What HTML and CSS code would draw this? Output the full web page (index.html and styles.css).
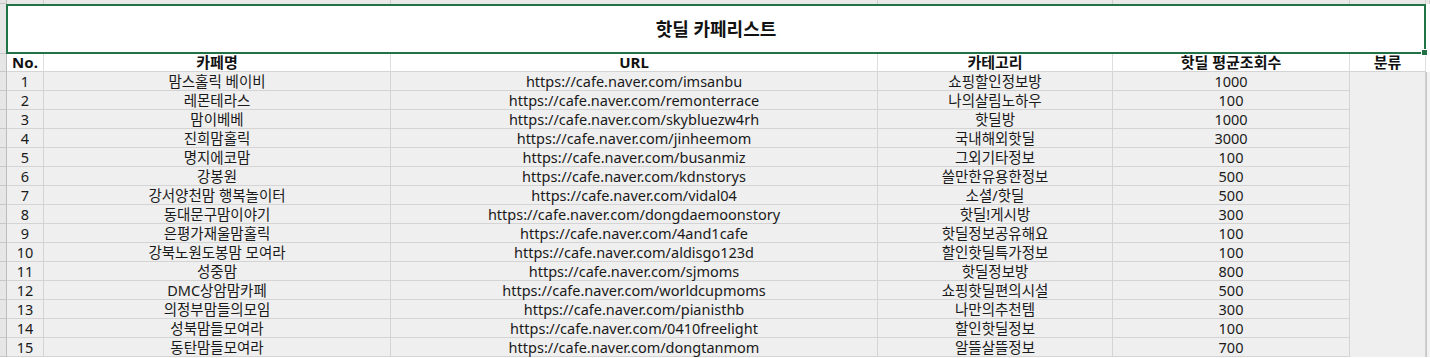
FILE: index.html
```html
<!DOCTYPE html>
<html lang="ko">
<head>
<meta charset="utf-8">
<title>핫딜 카페리스트</title>
<link rel="stylesheet" href="styles.css">
</head>
<body>
<div class="sheet">
  <!-- top strip (previous row, cut off) -->
  <div class="strip gut"></div>
  <div class="strip"></div>
  <div class="strip"></div>
  <div class="strip"></div>
  <div class="strip"></div>
  <div class="strip"></div>
  <div class="strip"></div>
  <div class="strip end"></div>

  <!-- title row -->
  <div class="gut title-gut"></div>
  <div class="title">핫딜 카페리스트<span class="handle"></span></div>
  <div class="end white"></div>

  <!-- header row -->
  <div class="gut"></div>
  <div class="hd">No.</div>
  <div class="hd">카페명</div>
  <div class="hd">URL</div>
  <div class="hd">카테고리</div>
  <div class="hd">핫딜 평균조회수</div>
  <div class="hd">분류</div>
  <div class="end white"></div>

  <div class="merged"></div>

  <div class="gut"></div><div class="c">1</div><div class="c">맘스홀릭 베이비</div><div class="c">https://cafe.naver.com/imsanbu</div><div class="c">쇼핑할인정보방</div><div class="c">1000</div><div class="end"></div>
  <div class="gut"></div><div class="c">2</div><div class="c">레몬테라스</div><div class="c">https://cafe.naver.com/remonterrace</div><div class="c">나의살림노하우</div><div class="c">100</div><div class="end"></div>
  <div class="gut"></div><div class="c">3</div><div class="c">맘이베베</div><div class="c">https://cafe.naver.com/skybluezw4rh</div><div class="c">핫딜방</div><div class="c">1000</div><div class="end"></div>
  <div class="gut"></div><div class="c">4</div><div class="c">진희맘홀릭</div><div class="c">https://cafe.naver.com/jinheemom</div><div class="c">국내해외핫딜</div><div class="c">3000</div><div class="end"></div>
  <div class="gut"></div><div class="c">5</div><div class="c">명지에코맘</div><div class="c">https://cafe.naver.com/busanmiz</div><div class="c">그외기타정보</div><div class="c">100</div><div class="end"></div>
  <div class="gut"></div><div class="c">6</div><div class="c">강봉원</div><div class="c">https://cafe.naver.com/kdnstorys</div><div class="c">쓸만한유용한정보</div><div class="c">500</div><div class="end"></div>
  <div class="gut"></div><div class="c">7</div><div class="c">강서양천맘 행복놀이터</div><div class="c">https://cafe.naver.com/vidal04</div><div class="c">소셜/핫딜</div><div class="c">500</div><div class="end"></div>
  <div class="gut"></div><div class="c">8</div><div class="c">동대문구맘이야기</div><div class="c">https://cafe.naver.com/dongdaemoonstory</div><div class="c">핫딜!게시방</div><div class="c">300</div><div class="end"></div>
  <div class="gut"></div><div class="c">9</div><div class="c">은평가재울맘홀릭</div><div class="c">https://cafe.naver.com/4and1cafe</div><div class="c">핫딜정보공유해요</div><div class="c">100</div><div class="end"></div>
  <div class="gut"></div><div class="c">10</div><div class="c">강북노원도봉맘 모여라</div><div class="c">https://cafe.naver.com/aldisgo123d</div><div class="c">할인핫딜특가정보</div><div class="c">100</div><div class="end"></div>
  <div class="gut"></div><div class="c">11</div><div class="c">성중맘</div><div class="c">https://cafe.naver.com/sjmoms</div><div class="c">핫딜정보방</div><div class="c">800</div><div class="end"></div>
  <div class="gut"></div><div class="c">12</div><div class="c">DMC상암맘카페</div><div class="c">https://cafe.naver.com/worldcupmoms</div><div class="c">쇼핑핫딜편의시설</div><div class="c">500</div><div class="end"></div>
  <div class="gut"></div><div class="c">13</div><div class="c">의정부맘들의모임</div><div class="c">https://cafe.naver.com/pianisthb</div><div class="c">나만의추천템</div><div class="c">300</div><div class="end"></div>
  <div class="gut"></div><div class="c">14</div><div class="c">성북맘들모여라</div><div class="c">https://cafe.naver.com/0410freelight</div><div class="c">할인핫딜정보</div><div class="c">100</div><div class="end"></div>
  <div class="gut"></div><div class="c">15</div><div class="c">동탄맘들모여라</div><div class="c">https://cafe.naver.com/dongtanmom</div><div class="c">알뜰살뜰정보</div><div class="c">700</div><div class="end"></div>
</div>
</body>
</html>
```

FILE: styles.css
```css
html, body {
  margin: 0;
  padding: 0;
  background: #ffffff;
}

body {
  font-family: "Noto Sans", "Noto Sans CJK KR", sans-serif;
  font-size: 14.5px;
  color: #1a1a1a;
  overflow: hidden;
}

.sheet {
  display: grid;
  grid-template-columns: 7px 37px 347px 487px 235px 237px 76px 1fr;
  grid-template-rows: 4px 50px 18px repeat(15, 19px);
  width: 1430px;
}

.sheet > div {
  box-sizing: border-box;
  min-width: 0;
}

.strip {
  background: #e9e9e9;
  border-right: 1px solid #cfcfcf;
}

.strip.gut {
  background: #e4e4e4;
  border-right: 1px solid #bdbdbd;
}

.gut {
  background: #e6e6e6;
  border-right: 1px solid #bdbdbd;
  border-bottom: 1px solid #c8c8c8;
}

.title-gut {
  border-bottom: 1px solid #c8c8c8;
}

.title {
  grid-column: 2 / 8;
  margin-left: -1px;
  position: relative;
  background: #ffffff;
  border: 2px solid #217346;
  display: flex;
  align-items: center;
  justify-content: center;
  font-size: 18px;
  font-weight: 700;
  color: #111;
  padding-bottom: 3px;
}

.handle {
  position: absolute;
  right: -4px;
  bottom: -4px;
  width: 5px;
  height: 5px;
  background: #217346;
  border: 1px solid #ffffff;
}

.end {
  background: #f2f2f2;
  border-left: 1px solid #c6c6c6;
}

.end.white, .strip.end {
  background: #ffffff;
  border-left: none;
}

.strip.end {
  background: #e9e9e9;
}

.hd {
  background: #ffffff;
  border-right: 1px solid #dedede;
  border-bottom: 1px solid #d4d4d4;
  display: flex;
  align-items: center;
  justify-content: center;
  font-size: 15px;
  font-weight: 700;
  line-height: 1;
  white-space: nowrap;
  color: #111;
}

.c {
  background: #efefef;
  border-right: 1px solid #d4d4d4;
  border-bottom: 1px solid #d4d4d4;
  display: flex;
  align-items: center;
  justify-content: center;
  line-height: 1;
  white-space: nowrap;
}

.merged {
  grid-column: 7;
  grid-row: 4 / span 15;
  background: #efefef;
  border-right: 1px solid #d0d0d0;
}
```
